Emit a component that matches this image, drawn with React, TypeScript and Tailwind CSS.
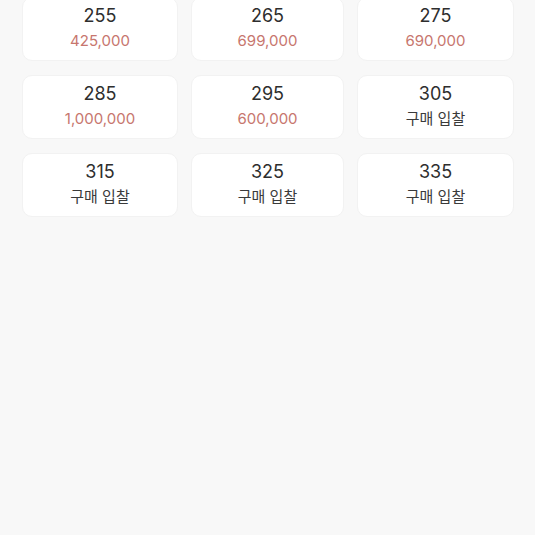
const sizes = [
  { size: '255', price: '425,000' },
  { size: '265', price: '699,000' },
  { size: '275', price: '690,000' },
  { size: '285', price: '1,000,000' },
  { size: '295', price: '600,000' },
  { size: '305', price: null },
  { size: '315', price: null },
  { size: '325', price: null },
  { size: '335', price: null },
]

export default function App() {
  return (
    <main className="min-h-[535px] bg-[#f8f8f8] overflow-hidden" style={{ fontFamily: 'Inter, "Noto Sans CJK KR", sans-serif' }}>
      <div className="grid grid-cols-[156px_153px_157px] auto-rows-[64px] gap-x-[13px] gap-y-[14px] pl-[22px] mt-[-3px]">
        {sizes.map(s => (
          <div key={s.size} className="bg-white rounded-[10px] border border-[#f2f2f2] flex flex-col items-center pt-[6px] gap-[3px]">
            <div className="text-[18px] leading-[24px] text-[#2e2e2e]">{s.size}</div>
            {s.price ? (
              <div className="text-[15px] leading-[20px] text-[#c7766e]">{s.price}</div>
            ) : (
              <div className="text-[15px] leading-[20px] text-[#3a3a3a]">구매 입찰</div>
            )}
          </div>
        ))}
      </div>
    </main>
  )
}
